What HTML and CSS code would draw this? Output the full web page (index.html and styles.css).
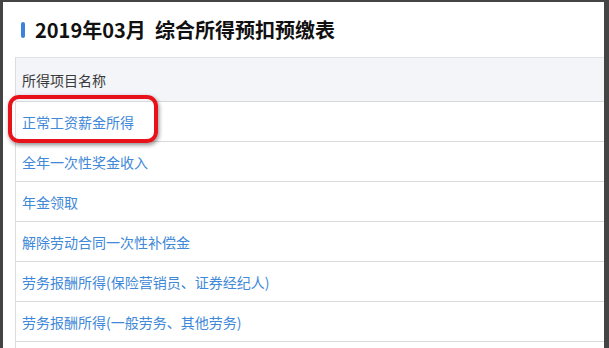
FILE: index.html
```html
<!DOCTYPE html>
<html lang="zh-CN">
<head>
<meta charset="utf-8">
<title>综合所得预扣预缴表</title>
<link rel="stylesheet" href="styles.css">
</head>
<body>
<div class="panel">
  <div class="title">
    <span class="title-bar"></span>
    <h1 class="title-text">2019年03月&nbsp;&nbsp;综合所得预扣预缴表</h1>
  </div>
  <div class="table">
    <div class="thead">所得项目名称</div>
    <div class="row"><a class="link">正常工资薪金所得</a></div>
    <div class="row"><a class="link">全年一次性奖金收入</a></div>
    <div class="row"><a class="link">年金领取</a></div>
    <div class="row"><a class="link">解除劳动合同一次性补偿金</a></div>
    <div class="row"><a class="link">劳务报酬所得(保险营销员、证券经纪人)</a></div>
    <div class="row"><a class="link">劳务报酬所得(一般劳务、其他劳务)</a></div>
    <div class="row"></div>
  </div>
  <div class="highlight"></div>
</div>
</body>
</html>
```

FILE: styles.css
```css
html, body {
  margin: 0;
  padding: 0;
  background: #444444;
  overflow: hidden;
}
body {
  width: 609px;
  height: 348px;
  font-family: "Noto Sans CJK SC", "Liberation Sans", sans-serif;
}
.panel {
  position: relative;
  margin: 2px 0 0 3px;
  width: 601px;
  height: 346px;
  background: #ffffff;
  overflow: hidden;
}
.title {
  display: flex;
  align-items: center;
  padding: 14px 0 0 18px;
  height: 28px;
}
.title-bar {
  width: 4px;
  height: 16px;
  border-radius: 2px;
  background: #3b82e0;
  margin-right: 10px;
}
.title-text {
  margin: 0;
  font-size: 20px;
  line-height: 28px;
  font-weight: bold;
  color: #111111;
  white-space: nowrap;
}
.table {
  margin: 13px 0 0 12px;
  border-left: 1px solid #dcdcdf;
}
.thead {
  display: flex;
  align-items: center;
  height: 43px;
  padding-left: 6px;
  background: #f4f5f8;
  border-top: 1px solid #e1e2e7;
  border-bottom: 1px solid #d8d9dd;
  font-size: 14px;
  color: #3a3a3a;
}
.row {
  display: flex;
  align-items: center;
  height: 39px;
  padding-left: 6px;
  border-bottom: 1px solid #d9d9d9;
}
.link {
  font-size: 14px;
  color: #4088d8;
  white-space: nowrap;
}
.highlight {
  position: absolute;
  left: 5px;
  top: 93px;
  width: 142px;
  height: 40px;
  border: 4px solid #e8121b;
  border-radius: 11px;
  box-shadow: 1px 2px 4px rgba(0, 0, 0, 0.45);
}
```
